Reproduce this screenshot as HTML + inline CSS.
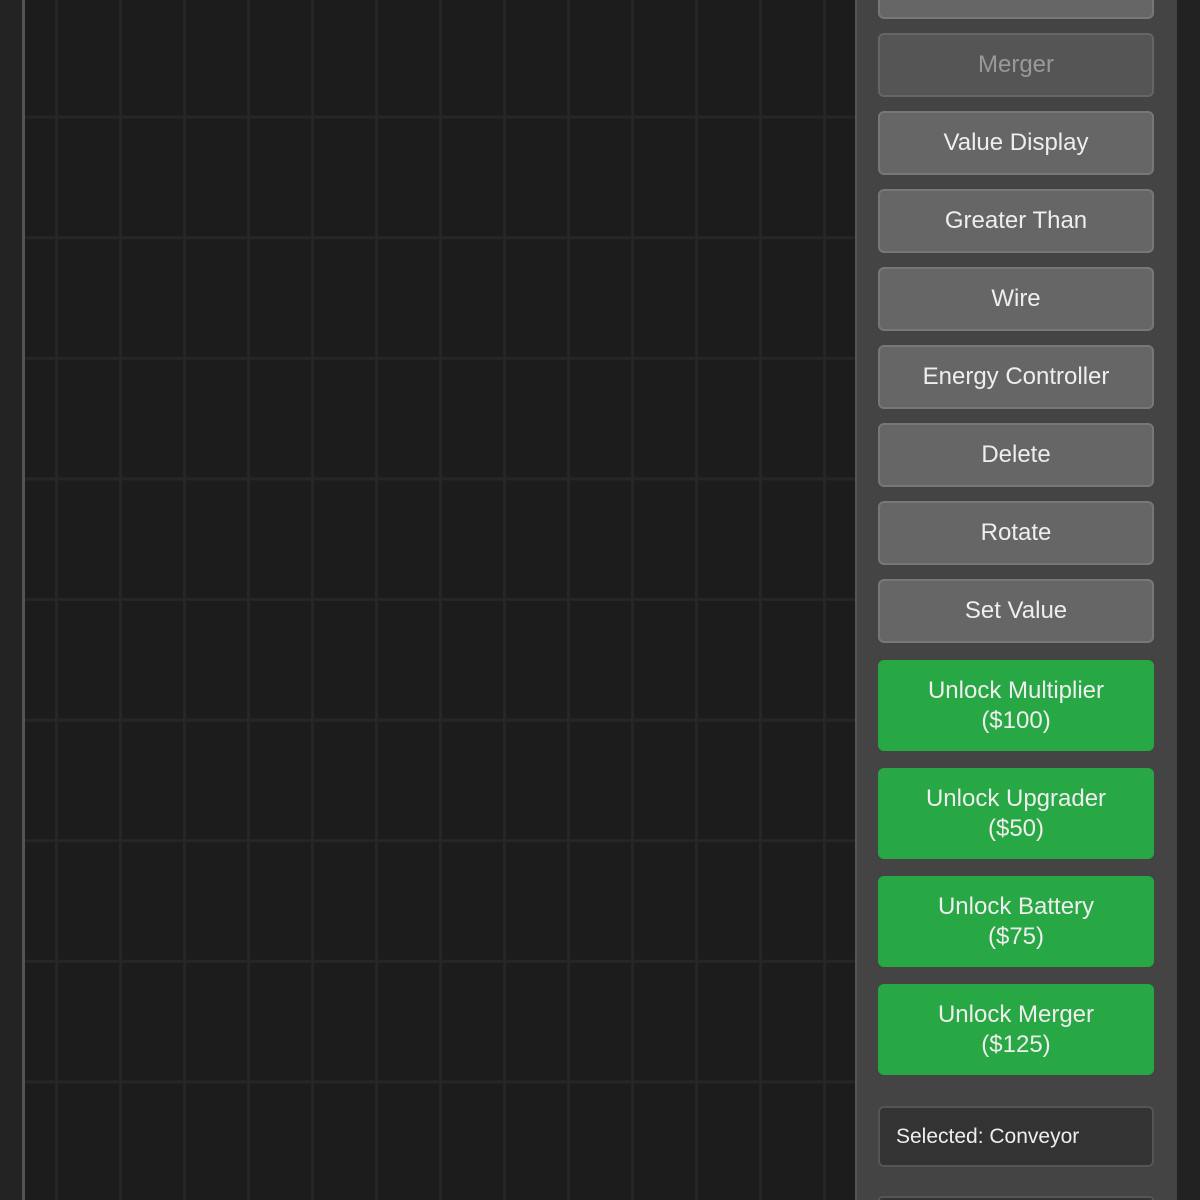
<!DOCTYPE html>
<html><head><style>
html,body{margin:0;padding:0;width:1200px;height:1200px;overflow:hidden;background:#222;font-family:"Liberation Sans",Roboto,sans-serif;position:relative}
#left{position:absolute;left:0;top:0;width:22px;height:1200px;background:#232323}
#canvas{position:absolute;left:22px;top:0;width:833px;height:1200px;background-color:#1c1c1c;border-left:3px solid #555;box-sizing:border-box;
background-image:linear-gradient(to right,#262626 0,#262626 3px,transparent 3px),linear-gradient(to bottom,#262626 0,#262626 3px,transparent 3px);
background-size:64px 100%,100% 120.6px;background-position:30px 0,0 -5px}
#panel{position:absolute;left:855px;top:0;width:322px;height:1200px;background:#444;border-left:2px solid #555;box-sizing:border-box}
.b{position:absolute;left:878px;width:276px;height:64px;box-sizing:border-box;background:#666;border:2px solid #777;border-radius:6px;color:#eee;font-size:24px;display:flex;align-items:center;justify-content:center;text-align:center;line-height:30px}
.d{background:#555;color:#999;border-color:#666}
.g{background:#28a745;border:none;height:91px}
#sel{position:absolute;left:878px;top:1106px;width:276px;height:61px;box-sizing:border-box;background:#333;border:2px solid #555;border-radius:6px;color:#eee;font-size:21px;padding-left:16px;display:flex;align-items:center}
#last{position:absolute;left:878px;top:1196px;width:276px;height:4px;background:#333;border:2px solid #555;border-bottom:none;border-radius:6px 6px 0 0;box-sizing:border-box}
</style></head><body>
<div id="left"></div>
<div id="canvas"></div>
<div id="panel"></div>
<div class="b" style="top:-45px">Battery</div>
<div class="b d" style="top:33px">Merger</div>
<div class="b" style="top:111px">Value Display</div>
<div class="b" style="top:189px">Greater Than</div>
<div class="b" style="top:267px">Wire</div>
<div class="b" style="top:345px">Energy Controller</div>
<div class="b" style="top:423px">Delete</div>
<div class="b" style="top:501px">Rotate</div>
<div class="b" style="top:579px">Set Value</div>
<div class="b g" style="top:660px">Unlock Multiplier<br>($100)</div>
<div class="b g" style="top:768px">Unlock Upgrader<br>($50)</div>
<div class="b g" style="top:876px">Unlock Battery<br>($75)</div>
<div class="b g" style="top:984px">Unlock Merger<br>($125)</div>
<div id="sel">Selected: Conveyor</div>
<div id="last"></div>
</body></html>
